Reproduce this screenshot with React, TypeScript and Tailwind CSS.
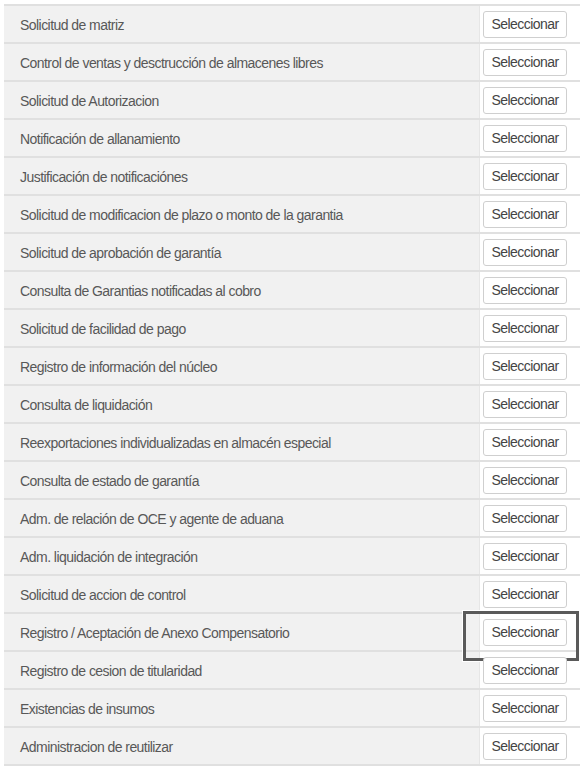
const items = [
  'Solicitud de matriz',
  'Control de ventas y desctrucción de almacenes libres',
  'Solicitud de Autorizacion',
  'Notificación de allanamiento',
  'Justificación de notificaciónes',
  'Solicitud de modificacion de plazo o monto de la garantia',
  'Solicitud de aprobación de garantía',
  'Consulta de Garantias notificadas al cobro',
  'Solicitud de facilidad de pago',
  'Registro de información del núcleo',
  'Consulta de liquidación',
  'Reexportaciones individualizadas en almacén especial',
  'Consulta de estado de garantía',
  'Adm. de relación de OCE y agente de aduana',
  'Adm. liquidación de integración',
  'Solicitud de accion de control',
  'Registro / Aceptación de Anexo Compensatorio',
  'Registro de cesion de titularidad',
  'Existencias de insumos',
  'Administracion de reutilizar',
]

function App() {
  return (
    <div className="w-[586px] h-[773px] bg-white pt-[4px] pl-[4px] font-['Liberation_Sans',Arial,sans-serif]">
      <div className="w-[576px] border-t-2 border-[#e0e0e0]">
        {items.map((item, i) => (
          <div key={i} className="flex h-[38px] border-b-2 border-[#e0e0e0]">
            <div className="w-[476px] bg-[#f1f1f1] border-r border-[#e6e6e6] flex items-center pt-[2px] pl-[16px] text-[14px] tracking-[-0.55px] text-[#585858]">
              {item}
            </div>
            <div className="flex-1 flex items-center pl-[3px] relative">
              <button className="w-[84px] h-[27px] border border-[#cfcfcf] rounded-[3px] bg-white pt-[1px] text-[14px] tracking-[-0.55px] text-[#444] flex items-center justify-center">
                Seleccionar
              </button>
              {i === 16 && (
                <div className="absolute left-[-17px] top-[-3px] w-[116px] h-[50px] border-[3px] border-[#5a5a5a] outline outline-1 outline-white"></div>
              )}
            </div>
          </div>
        ))}
      </div>
    </div>
  )
}

export default App
